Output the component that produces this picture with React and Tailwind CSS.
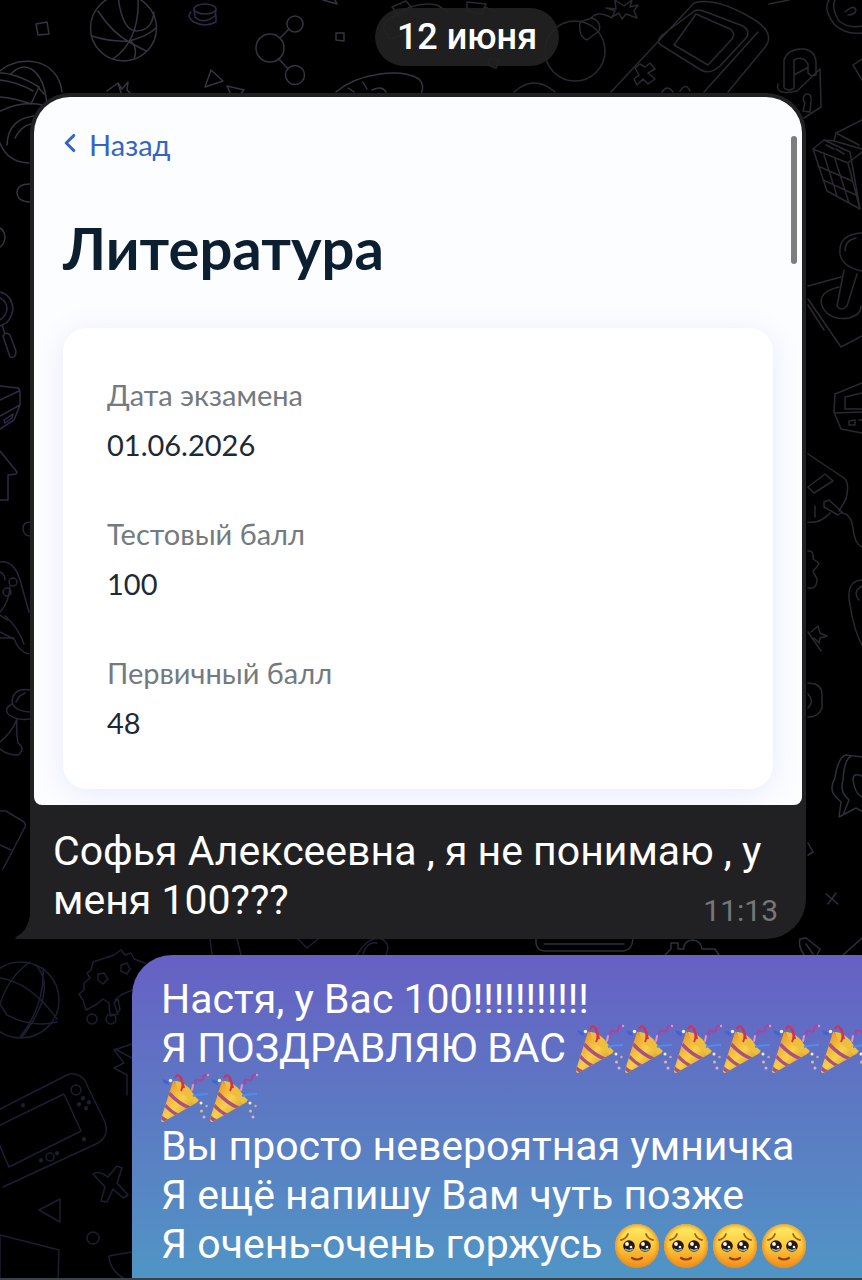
import { ChevronLeft } from "lucide-react";

const results = [
  { label: "Дата экзамена", value: "01.06.2026" },
  { label: "Тестовый балл", value: "100" },
  { label: "Первичный балл", value: "48" },
];

const Popper = () => (
  <svg
    viewBox="0 0 49 49"
    role="img"
    aria-label="Хлопушка"
    className="inline-block w-[49px] h-[49px] align-top"
  >
    <defs>
      <linearGradient id="cone" x1="0" y1="0" x2="1" y2="1">
        <stop offset="0.2" stopColor="#eda02c" />
        <stop offset="0.5" stopColor="#f8d04a" />
        <stop offset="0.9" stopColor="#cf8c24" />
      </linearGradient>
      <clipPath id="coneClip">
        <path d="M12 8 C19 8 35 20 37 29 L2 49 Q0 49 0 46 Z" />
      </clipPath>
    </defs>
    <path d="M1 6 l6 2 l1 4 l-5 -2 Z" fill="#3f62d8" />
    <path d="M12 8 C19 8 35 20 37 29 L2 49 Q0 49 0 46 Z" fill="url(#cone)" />
    <g clipPath="url(#coneClip)" fill="none" stroke="#a9517f" strokeWidth="3.4">
      <path d="M8 20 Q18 31 29 35" />
      <path d="M4 32 Q10 39 17 42" />
      <path d="M-1 43 Q3 47 7 48" />
    </g>
    <path d="M13 8 C19 9 31 19 35 28 C28 27 16 16 13 8Z" fill="#c98620" />
    <path d="M14 8 C22 8 32 17 32 22 L38 27 L33 31 L27 25 C20 21 15 14 14 8Z" fill="#eebf3c" />
    <path
      d="M14 5 Q17 -1 20 6 Q23 12 20 18 M20 4 Q22 10 23 15"
      fill="none"
      stroke="#d62f52"
      strokeWidth="2"
    />
    <path d="M32 23 Q38 21 47 21" fill="none" stroke="#4e8df0" strokeWidth="2" />
    <path
      d="M35 11 Q33 5 38 7 Q43 9 42 4 Q43 1 47 2"
      fill="none"
      stroke="#a8439f"
      strokeWidth="2"
    />
    <path d="M32 12 L31 17" stroke="#ef8fc4" strokeWidth="2" strokeLinecap="round" />
    <circle cx="47" cy="2" r="1.2" fill="#ef8fc4" />
    <circle cx="9.500" cy="7.500" r="1.700" fill="#f5f0d8" />
    <circle cx="40" cy="30" r="1.500" fill="#f5efcf" />
    <circle cx="45.500" cy="33" r="1.300" fill="#c9a9a0" />
    <circle cx="40.500" cy="38" r="1.500" fill="#e0b98a" />
    <circle cx="43" cy="44" r="1.500" fill="#dcb0d8" />
  </svg>
);

const PleadingFace = () => (
  <svg
    viewBox="0 0 49 49"
    role="img"
    aria-label="Умоляющее лицо"
    className="inline-block w-[49px] h-[49px] align-top"
  >
    <defs>
      <linearGradient id="face" x1="0" y1="0" x2="0" y2="1">
        <stop offset="0" stopColor="#fff06a" />
        <stop offset="0.5" stopColor="#fdc93c" />
        <stop offset="1" stopColor="#f28a1c" />
      </linearGradient>
      <radialGradient id="rim">
        <stop offset="0.78" stopColor="#f39a1f" stopOpacity="0" />
        <stop offset="1" stopColor="#e88a1a" stopOpacity="0.8" />
      </radialGradient>
    </defs>
    <circle cx="24" cy="26" r="22" fill="url(#face)" />
    <circle cx="24" cy="26" r="22" fill="url(#rim)" />
    {[16, 32].map((cx) => (
      <g key={cx}>
        <circle cx={cx} cy="26" r="5.800" fill="#27160f" />
        <path d={`M${cx - 4} 29 a5 4 0 0 0 8 0 a6 4 0 0 1 -8 0`} fill="#7fb9b4" stroke="#7fb9b4" />
        <circle cx={cx - 2} cy="24" r="1.900" fill="#fff" />
        <circle cx={cx + 2} cy="27" r="1.300" fill="#e8f4ff" />
      </g>
    ))}
    <path
      d="M8 20 Q13 19 15 14 M33 14 Q35 19 40 20"
      fill="none"
      stroke="#a45b14"
      strokeWidth="1.800"
      strokeLinecap="round"
    />
    <path
      d="M19 38 Q24 41 29 38"
      fill="none"
      stroke="#8f3f12"
      strokeWidth="2.200"
      strokeLinecap="round"
    />
  </svg>
);

const Doodles = () => (
  <svg
    viewBox="0 0 862 1280"
    aria-hidden="true"
    className="absolute top-0 left-0 w-full"
    fill="none"
    strokeWidth="1.500"
    strokeLinejoin="round"
    strokeLinecap="round"
  >
    <g stroke="#37333f">
      {/* basketball */}
      <circle cx="123.500" cy="28" r="33" />
      <path d="M98 11 Q112 33 131 43 Q146 51 146 51 M118 -4 Q122 30 136 31 Q152 31 154 12 M138 -2 Q140 40 113 59 M92 36 Q110 42 129 41 Q148 36 156 28 M131 41 Q138 49 134 59" />
      <path d="M36 24 L47 22 L49 34 L38 35 Z" />
      {/* molecule */}
      <circle cx="270" cy="48" r="14" />
      <circle cx="295" cy="24" r="8" />
      <circle cx="295" cy="75" r="9.500" />
      <path d="M280 38 L289 29 M279 59 L288 69 M336 33 L344 33 L344 41 L336 40 Z" />
      <path d="M211 70 L223 81 L205 87 Z M227 86 L244 90 L238 97 M227 86 L232 97 M107 91 L118 83 L122 89 L128 82 L127 90 L134 97 M118 83 L122 96 M323 0 L337 4 L335 0" />
      {/* pizza */}
      <path d="M336 92 C358 73 400 68 419 79 Q425 85 421 94 M348 88 L354 92 M363 82 L367 89 M372 90 Q382 85 386 92" />
      {/* volleyball */}
      <path d="M0 71 C20 54 58 58 62 92 M11 74 C23 60 43 66 47 104 M0 73 Q16 73 39 87 L31 104 Q14 98 0 97 M0 80 Q18 82 33 91 M38 87 L44 94 M0 111 Q24 100 43 105 M7 145 Q8 119 34 116 M15 138 Q21 126 31 124 M0 143 Q7 162 29 163" />
      <path d="M30 184 Q17 184 17 193 Q18 202 30 202 M0 228 Q5 231 5 238 Q4 245 0 247" />
    </g>
    <g stroke="#2f2a45">
      <ellipse cx="205" cy="9" rx="11" ry="5" />
      <path d="M194 9 L195 17 Q203 25 215 16 L216 10 M191 12 Q186 17 194 22 Q205 28 216 22 L216 15" />
      {/* magnifier */}
      <path d="M0 292 Q12 295 13 309 Q11 323 0 326 M0 298 Q7 302 7 309 Q6 316 0 320 M2 325 L5 334 M3 336 Q6 331 10 335 L16 351 Q16 359 10 357 Z" />
      <path d="M0 386 L18 388 Q20 389 20 394 L20 405 L14 420 L0 429 M0 400 L19 391 M0 416 L20 405 M4 420 L13 414 L12 418 L5 423 Z" />
      <path d="M0 451 L17 472 L16 474 L8 475 L8 500 L0 500" />
    </g>
    <g stroke="#29253a">
      <path d="M30 522 Q23 522 23 529 Q24 536 30 536" />
      {/* figure */}
      <path d="M0 562 Q14 560 20 580 L29 612 M0 572 Q5 574 5 580 M10 586 Q9 603 0 612 M5 616 Q18 627 24 644 M0 615 L7 620 M0 632 L14 639 Q20 653 29 654 M0 638 L14 638" />
      <circle cx="13" cy="582" r="4" />
      <circle cx="7" cy="592" r="4" />
      {/* pawn */}
      <path d="M30 690 Q14 687 12 701 Q13 711 30 712 M16 702 Q19 695 25 693 M12 704 Q4 708 8 714 Q16 721 30 719 M17 719 Q12 732 0 742 M17 719 Q16 733 18 743 Q26 749 18 755 Q7 755 0 749" />
      <path d="M0 811 L6 811 L24 822 Q26 824 25 827 L3 869 M0 845 L11 850" />
    </g>
    <g stroke="#2b2830">
      {/* bomb */}
      <circle cx="575" cy="51" r="30" />
      <path d="M580 22 L592 18 Q602 22 599 31 L587 40 Q578 37 580 22 Z M591 18 Q598 10 612 18 M606 8 L616 9 L615 0 L624 6 L632 0 L630 7 L638 5 L634 11 L637 18 L626 14 L622 19 L619 13 L612 17 L615 11 Z" />
      {/* cable */}
      <path d="M389 36 Q375 25 396 15 Q415 1 437 5 L448 12 M392 7 L406 1 L411 7 L399 16 Z M388 38 Q404 39 412 22 M467 2 L486 4 L482 14 L467 11 Z M484 7 L497 12 M490 58 L499 60 L496 68 L488 65 Z" />
      <path d="M514 92 Q534 74 555 92" />
      {/* handheld console */}
      <path d="M611 92 L694 3 Q714 -3 748 16 Q776 31 766 46 L728 92 M758 32 L704 92 M693 12 Q697 8 706 12 L743 26 Q751 31 746 38 L720 66 Q710 75 701 70 L661 45 Q656 42 661 36 Z M696 14 L730 29 Q736 33 732 39 L708 65 L674 45 Z" />
      <path d="M635 68 L640 64 L645 67 L650 63 L655 69 L648 73 L655 79 L648 84 L643 79 L637 85 L634 79 L639 75 Z M662 92 Q667 84 673 92 M680 91 Q686 82 690 91" />
      {/* lock */}
      <path d="M784 88 L784 60 Q788 48 804 49 Q817 51 816 66 L816 75 Q811 77 808 73 L808 64 Q803 55 794 60 L794 88 Q789 92 784 88 M778 84 Q775 96 797 91 L820 69 L821 107 L804 118 M794 75 L807 68 M806 94 Q812 93 811 101 L810 112 L803 111 L805 103 Q801 98 806 94" />
      <path d="M829 0 Q823 9 834 24 Q845 35 862 33 M835 0 Q831 8 839 21 Q849 29 862 26 M845 12 Q854 4 856 10 Q855 15 848 15 M769 4 L789 0 M862 59 L853 65 L862 80" />
      {/* puzzle cube */}
      <path d="M813 149 L824 140 L850 152 L860 209 L827 191 Z M813 149 L848 163 L860 209 M848 163 L862 152 M824 140 L834 141 L862 149 M834 141 L836 133 L862 120 M836 133 L859 145 M818 166 L852 181 M823 180 L856 195 M824 155 L837 196 M835 159 L849 203 M826 145 L834 149 M836 149 L844 154" />
      {/* joystick */}
      <path d="M862 233 Q838 234 840 254 Q842 267 862 271 M845 251 Q845 240 856 238 M844 270 L837 306 Q841 312 847 306 L857 274 M808 286 L841 277 M808 299 L841 347 L862 336 M808 305 L824 330 M839 287 Q817 292 822 306 Q829 321 849 318 Q861 315 861 306" />
      <path d="M862 383 L835 394 L834 412 L841 429 L862 433 M835 413 L862 412 M862 393 L845 397 L845 409 L862 409 M849 421 L855 420 L855 425 L849 425 Z M859 420 L862 420" />
      <path d="M808 454 L844 478 Q850 483 846 499 L839 511 M808 487 L825 474 L833 481 L814 493 Z M808 522 Q820 524 830 513 M815 506 L815 517 M824 502 L829 500 L842 512 L838 515 L824 507 Z M842 513 Q851 514 853 528 Q854 543 862 547" />
      <path d="M808 551 Q814 550 813 559 L819 563 Q817 568 813 571 L817 579 Q817 590 808 588 M862 580 Q845 581 850 605 Q854 631 862 645 M862 586 Q852 592 859 600 M808 632 L821 651 M811 632 L818 626 L820 633 L827 636 L820 638 L819 643 L814 638" />
      <path d="M808 683 L815 684 Q822 687 822 694 L822 708 Q819 717 808 717 M808 694 Q815 701 808 708" />
    </g>
    <g stroke="#2b303b">
      <path d="M862 757 L846 755 Q838 757 835 778 Q828 790 837 798 L841 802 L839 817 L856 808 L862 811 M851 756 Q844 760 843 781 Q839 791 849 800 L843 815 M862 776 Q853 772 853 780 Q855 794 862 797" />
      <path d="M808 843 L813 852 L808 855 M826 894 L838 904 M836 893 L828 904" />
      <path d="M536 939 L536 944 Q538 951 545 951 L624 951 Q632 950 633 939 M544 944 L624 944 M665 955 L671 949 L671 943 L678 943 L678 949 L684 949 Q683 941 693 940 Q701 941 702 949 L715 949 L719 955 M800 939 L806 938 L820 949 L817 955 M800 939 Q798 946 804 955 M806 944 L813 954 M843 955 L862 938" />
    </g>
    <g stroke="#1d1d33">
      {/* globe */}
      <circle cx="21" cy="1000" r="38" />
      <path d="M0 978 Q30 982 57 1019 M36 965 Q58 990 22 1037 M30 962 Q9 976 0 1004 L7 1015 Q31 1028 57 1022 M43 968 Q45 1006 20 1037" />
      <path d="M93 962 L114 955 L121 950 L125 955 L131 953 L134 959 L145 963 M93 962 L91 970 L87 973 L90 978 L84 983 L84 990 L79 994 L83 1000 L86 1010 L97 1004 L103 999 L109 1003 L110 1016 L118 1014 L114 1003 L118 999 L120 1010 L118 1012 M98 974 L104 973 L108 979 L103 984 L98 980 Z M121 965 L127 963 L130 969 L127 974 L121 971 Z M115 1000 L121 995 L132 990" />
      <circle cx="92" cy="1019" r="5" />
      <circle cx="111" cy="1019" r="5" />
      <path d="M210 939 L212 955 M237 939 L241 955 M298 939 L307 948 L318 939 M357 955 Q368 936 382 939 Q391 944 386 955 M363 954 Q367 941 377 943" />
      {/* game console */}
      <path d="M0 1109 L69 1074 Q77 1073 84 1079 L105 1122 Q110 1137 96 1144 L3 1187 M0 1125 L64 1094 L81 1131 L9 1167 L0 1146" />
      <circle cx="76" cy="1090" r="5" />
      <circle cx="50" cy="1157" r="4" />
      <path d="M83 1098 L83 1098.500 M89 1102 L89 1102.500 M79 1104 L79 1104.500 M86 1108 L86 1108.500 M23 1105 L23 1105.500 M41 1160 L41 1160.500 M57 1153 L57 1153.500 M84 1139 L84 1139.500" strokeWidth="4" />
      <path d="M93 1174 Q98 1170 108 1177 L117 1166 L122 1168 L117 1183 L128 1195 L123 1198 L113 1189 L107 1202 L101 1201 L105 1187 Z M132 1044 L114 1050 L124 1063 L114 1068 L127 1075 L127 1095 M115 1049 L132 1058 M39 1210 L60 1199 L60 1222 Z M0 1235 L59 1250 L58 1280 M0 1235 L0 1280 M132 1252 L109 1256 Q109 1270 126 1280" />
      <circle cx="93" cy="1238" r="6" />
    </g>
  </svg>
);

const ExamCard = () => (
  <div className="relative pt-7 pb-4 px-[29px] bg-[#fcfdff] rounded-t-[36px] rounded-b-lg overflow-hidden font-[Lato,sans-serif]">
    <a
      href="#back"
      className="flex items-center gap-1 h-10 -ml-2 text-[29px] text-[#3565c4]"
    >
      <ChevronLeft className="size-[30px] -mt-1" strokeWidth={2.5} />
      Назад
    </a>
    <h1 className="mt-12 text-[58px] leading-[70px] font-bold text-[#0b1f30]">
      Литература
    </h1>
    <dl className="mt-[45px] pt-[42px] pb-[41px] px-11 space-y-[39px] bg-white rounded-3xl shadow-[0_4px_28px_rgba(70,110,230,0.12)] text-[29px] leading-[50px]">
      {results.map((item) => (
        <div key={item.label}>
          <dt className="text-[#737a80]">{item.label}</dt>
          <dd className="text-[#1c2a36]">{item.value}</dd>
        </div>
      ))}
    </dl>
    <div className="absolute top-[39px] right-[5px] w-[6px] h-32 rounded-full bg-[#7d7e80]" />
  </div>
);

const App = () => {
  return (
    <div className="relative overflow-hidden bg-black font-[Roboto,sans-serif] text-white">
      <Doodles />
      {/* the chat runs past the right edge of the window */}
      <main className="relative -mr-[72px] pt-2">
        <div className="flex justify-center">
          <time className="px-[22px] rounded-full bg-[#222224]/90 text-[36px] leading-[58px] font-medium">
            12 июня
          </time>
        </div>

        <article className="relative mt-[27px] ml-[30px] mr-32 px-1 pt-1 bg-[#212123] rounded-[40px] rounded-bl-none">
          <ExamCard />
          <p className="pt-[22px] pb-[14px] pl-[19px] pr-6 text-[41px] leading-[49px]">
            Софья Алексеевна , я не понимаю , у меня 100???
            <time className="float-right mt-[21px] text-[30px] leading-[28px] text-[#77777a]">
              11:13
            </time>
          </p>
          <svg
            viewBox="0 0 16 30"
            aria-hidden="true"
            className="absolute bottom-0 -left-[15px] w-4 h-[30px]"
            fill="#212123"
          >
            <path d="M16 0 L15 6 Q13 22 1 28 Q-1 30 2 30 L16 30 Z" />
          </svg>
        </article>

        <article className="mt-4 ml-[132px] mr-3 px-[29px] pt-5 pb-[9px] rounded-t-[40px] bg-linear-to-b from-[#6660c4] via-[#5b7ac3] to-[#4f95c5] text-[41px] leading-[49px]">
          <p>Настя, у Вас 100!!!!!!!!!!!</p>
          <p>
            Я ПОЗДРАВЛЯЮ ВАС{" "}
            {Array.from({ length: 8 }, (_, i) => (
              <Popper key={i} />
            ))}
          </p>
          <p>Вы просто невероятная умничка</p>
          <p>Я ещё напишу Вам чуть позже</p>
          <p>
            Я очень-очень горжусь{" "}
            {Array.from({ length: 4 }, (_, i) => (
              <PleadingFace key={i} />
            ))}
          </p>
        </article>
        <div className="h-[2px] bg-[#3a4247]" />
      </main>
    </div>
  );
};

export default App;
